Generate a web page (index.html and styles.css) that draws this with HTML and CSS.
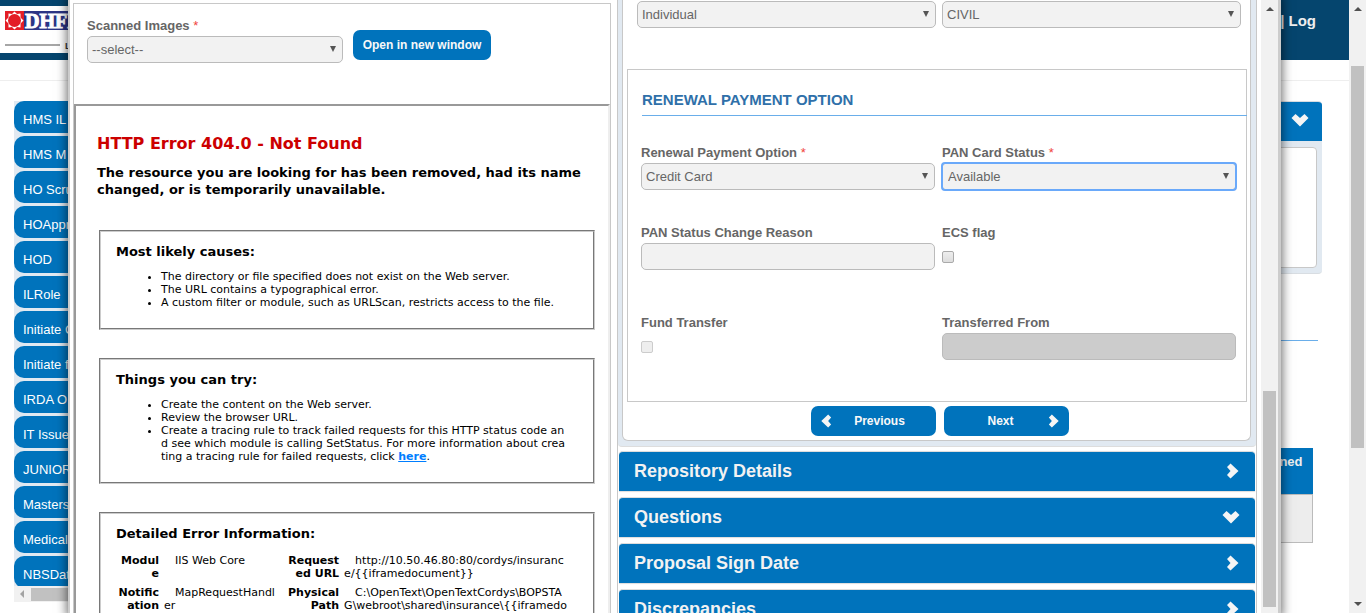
FILE: index.html
```html
<!DOCTYPE html>
<html lang="en">
<head>
<meta charset="utf-8">
<title>Renewal Payment Option</title>
<link rel="stylesheet" href="styles.css">
</head>
<body>
<svg class="defs" aria-hidden="true">
  <symbol id="chev-right" viewBox="0 0 14 16"><path d="M1 4 4.500 0.500 12.500 8 4.500 15.500 1 12 4.500 8Z"/></symbol>
  <symbol id="chev-left" viewBox="0 0 14 16"><path d="M13 4 9.500 0.500 1.500 8 9.500 15.500 13 12 9.500 8Z"/></symbol>
  <symbol id="chev-down" viewBox="0 0 18 14"><path d="M0.500 5 4.500 1 9 5 13.500 1 17.500 5 9 13.500Z"/></symbol>
</svg>
<div class="page">
  <div class="page-body">
    <header class="topbar">
      <div class="brand">
        <svg class="logo" width="100" height="47" viewBox="0 0 100 47" role="img" aria-label="DHFL">
          <rect x="5" y="5" width="90" height="19" fill="#2b3585"/>
          <rect x="5" y="5" width="19" height="19" fill="#e31e26"/>
          <path d="M14.500 5.500 17 8 20.500 7.500 20.500 11.500 23.500 14.500 20.500 17.500 20.500 21.500 17 21 14.500 23.500 12 21 8.500 21.500 8.500 17.500 5.500 14.500 8.500 11.500 8.500 7.500 12 8Z" fill="#fff"/>
          <circle cx="14.500" cy="14.500" r="6.500" fill="#e31e26"/>
          <text x="25" y="22" class="logo-name">DHFL</text>
          <path d="M5 39H60" stroke="#888" stroke-width="1.500"/>
          <text x="65" y="43" class="logo-sub">L</text>
        </svg>
      </div>
      <nav class="account"><span>|</span> <a href="#">Log</a></nav>
    </header>
    <div class="crumbs"></div>
    <div class="columns">
      <nav class="side">
        <ul class="roles">
          <li><a href="#">HMS IL</a></li>
          <li><a href="#">HMS M</a></li>
          <li><a href="#">HO Scru</a></li>
          <li><a href="#">HOAppr</a></li>
          <li><a href="#">HOD</a></li>
          <li><a href="#">ILRole</a></li>
          <li><a href="#">Initiate C</a></li>
          <li><a href="#">Initiate f</a></li>
          <li><a href="#">IRDA O</a></li>
          <li><a href="#">IT Issue</a></li>
          <li><a href="#">JUNIOR</a></li>
          <li><a href="#">Masters</a></li>
          <li><a href="#">Medical</a></li>
          <li><a href="#">NBSDat</a></li>
        </ul>
        <div class="hscroll"><span class="arrow-left"></span><span class="hthumb"></span></div>
      </nav>
      <main class="work">
        <section class="work-panel">
          <div class="work-head"><svg class="chev-d"><use href="#chev-down"/></svg></div>
          <div class="work-box"></div>
        </section>
        <div class="rule"></div>
        <table class="grid"><thead><tr><th>ned</th></tr></thead><tbody><tr><td></td></tr></tbody></table>
      </main>
    </div>
  </div>
  <div class="vscroll page-scroll"><span class="arrow-up"></span><span class="thumb"></span><span class="arrow-down"></span></div>
</div>

<div class="dialog" role="dialog">
  <div class="dialog-body">
    <section class="docs">
      <div class="docs-form">
        <div class="field scanned">
          <label for="scan">Scanned Images <span class="req">*</span></label>
          <div class="select"><select id="scan"><option>--select--</option></select></div>
        </div>
        <button type="button" class="btn open">Open in new window</button>
      </div>
      <article class="viewer">
        <h1>HTTP Error 404.0 - Not Found</h1>
        <h2>The resource you are looking for has been removed, had its name changed, or is temporarily unavailable.</h2>
        <div class="card">
          <h3>Most likely causes:</h3>
          <ul>
            <li>The directory or file specified does not exist on the Web server.</li>
            <li>The URL contains a typographical error.</li>
            <li>A custom filter or module, such as URLScan, restricts access to the file.</li>
          </ul>
        </div>
        <div class="card">
          <h3>Things you can try:</h3>
          <ul>
            <li>Create the content on the Web server.</li>
            <li>Review the browser URL.</li>
            <li>Create a tracing rule to track failed requests for this HTTP status code an<br>d see which module is calling SetStatus. For more information about crea<br>ting a tracing rule for failed requests, click <a href="#">here</a>.</li>
          </ul>
        </div>
        <div class="card">
          <h3>Detailed Error Information:</h3>
          <table class="details">
            <tr><th>Modul<br>e</th><td>IIS Web Core</td><th>Request<br>ed URL</th><td>http://10.50.46.80:80/cordys/insuranc<br>e/{{iframedocument}}</td></tr>
            <tr><th>Notific<br>ation</th><td>MapRequestHandl<br>er</td><th>Physical<br>Path</th><td>C:\OpenText\OpenTextCordys\BOPSTA<br>G\webroot\shared\insurance\{{iframedo</td></tr>
          </table>
        </div>
      </article>
    </section>

    <section class="accordion">
      <div class="pane">
        <form class="pane-inner">
          <div class="row top-row">
            <div class="select"><select aria-label="Type"><option>Individual</option></select></div>
            <div class="select"><select aria-label="Category"><option>CIVIL</option></select></div>
          </div>
          <div class="group">
            <h4>RENEWAL PAYMENT OPTION</h4>
            <div class="row fields">
              <div class="field">
                <label for="rpo">Renewal Payment Option <span class="req">*</span></label>
                <div class="select"><select id="rpo"><option>Credit Card</option></select></div>
              </div>
              <div class="field">
                <label for="pan">PAN Card Status <span class="req">*</span></label>
                <div class="select focus"><select id="pan"><option>Available</option></select></div>
              </div>
            </div>
            <div class="row fields">
              <div class="field">
                <label for="reason">PAN Status Change Reason</label>
                <input type="text" id="reason" class="text">
              </div>
              <div class="field">
                <label for="ecs">ECS flag</label>
                <input type="checkbox" id="ecs" class="check">
              </div>
            </div>
            <div class="row fields">
              <div class="field">
                <label for="fund">Fund Transfer</label>
                <input type="checkbox" id="fund" class="check" disabled>
              </div>
              <div class="field">
                <label for="from">Transferred From</label>
                <input type="text" id="from" class="text" disabled>
              </div>
            </div>
          </div>
          <div class="steps">
            <button type="button" class="btn step"><svg><use href="#chev-left"/></svg><span>Previous</span></button>
            <button type="button" class="btn step"><span>Next</span><svg><use href="#chev-right"/></svg></button>
          </div>
        </form>
      </div>
      <div class="bars">
        <button type="button" class="bar">Repository Details<svg class="chev-r"><use href="#chev-right"/></svg></button>
        <button type="button" class="bar">Questions<svg class="chev-d"><use href="#chev-down"/></svg></button>
        <button type="button" class="bar">Proposal Sign Date<svg class="chev-r"><use href="#chev-right"/></svg></button>
        <button type="button" class="bar">Discrepancies<svg class="chev-r"><use href="#chev-right"/></svg></button>
      </div>
    </section>
  </div>
  <div class="vscroll dialog-scroll"><span class="arrow-up"></span><span class="thumb"></span></div>
</div>
</body>
</html>
```
FILE: styles.css
```css
* { box-sizing: border-box; }
body {
  margin: 0;
  height: 100vh;
  overflow: hidden;
  position: relative;
  background: #fff;
  color: #666;
  font: 13px/20px "Liberation Sans", Arial, sans-serif;
}
button, select, input { font: inherit; color: inherit; margin: 0; }
h1, h2, h3, h4, ul { margin: 0; padding: 0; }
svg { display: block; fill: #f5f5f5; }
.defs { display: none; }
a { color: inherit; text-decoration: none; }

/* page behind the dialog */
.page { display: flex; height: 100%; }
.page-body { flex: 1; min-width: 0; }
.topbar { display: flex; justify-content: space-between; height: 60px; padding: 6px 0 7px; background: #05456e; }
.brand { background: #fff; width: 200px; }
.logo-name { font: bold 20px "Liberation Serif", serif; fill: #fff; stroke: #fff; stroke-width: 1px; }
.logo-sub { font: bold 9px "Liberation Sans", sans-serif; fill: #333; }
.account { padding: 5px 33px 0 0; color: #eee; font-weight: bold; font-size: 15px; }
.crumbs { height: 21px; border-bottom: 1px solid #eee; }
.columns { display: flex; padding: 20px 27px 0 14px; justify-content: space-between; }
.side { width: 220px; }
.roles { list-style: none; background: #e1e9f1; }
.roles li { padding-bottom: 3px; }
.roles li:last-child { padding-bottom: 0; height: 30px; overflow: hidden; }
.roles a { display: block; height: 32px; padding: 9px 9px 0; line-height: 19px; border-radius: 10px; background: #0073bc; color: #fff; }
.hscroll { display: flex; align-items: center; height: 16px; background: #f1f1f1; }
.arrow-left { width: 10px; height: 8px; border: 4px solid transparent; border-left-width: 6px; border-right-color: #a3a3a3; margin-right: 7px; }
.hthumb { width: 150px; height: 13px; background: #c1c1c1; }
.work { width: 900px; }
.work-panel { background: #e1e9f1; border: 1px solid #d8dde2; border-width: 1px 0 1px 1px; border-radius: 4px; height: 173px; padding-bottom: 5px; display: flex; flex-direction: column; overflow: hidden; }
.work-head { display: flex; justify-content: flex-end; align-items: center; height: 39px; padding: 0 13px 4px 0; background: #0073bc; }
.work-box { flex: 1; margin: 6px 5px 0; background: #fff; border: 1px solid #c8c8c8; border-radius: 0 4px 4px 0; }
.rule { border-top: 1px solid #6aaeea; margin: 66px 4px 107px 0; }
.grid { width: 891px; border-collapse: collapse; }
.grid th { height: 46px; padding: 4px 10px; background: #0073bc; color: #eee; text-align: right; vertical-align: top; }
.grid td { height: 48px; background: #ededed; border: 1px solid #bbb; }

/* scrollbars */
.vscroll { display: flex; flex-direction: column; align-items: center; width: 17px; background: #f1f1f1; }
.arrow-up { border: 4px solid transparent; border-top: 0; border-bottom-color: #505050; margin-top: 7px; }
.arrow-down { border: 4px solid transparent; border-bottom: 0; border-top-color: #505050; margin: auto 0 7px; }
.thumb { width: 13px; background: #c1c1c1; }
.page-scroll .thumb { margin-top: 55px; height: 382px; }
.dialog-scroll .thumb { margin-top: 380px; height: 216px; }

/* dialog */
.dialog {
  position: absolute;
  top: -4px;
  bottom: -4px;
  left: 68px;
  right: 85px;
  display: flex;
  padding: 4px 0;
  overflow: hidden;
  background: #fff;
  border: solid #ccc;
  border-width: 0 3px 0 2px;
  box-shadow: 0 0 10px 1px rgba(0, 0, 0, .6);
}
.dialog-body { flex: 1; min-width: 0; display: grid; grid-template-columns: 538fr 640fr; gap: 6px; padding: 0 4px 0 3px; }
.docs { display: flex; flex-direction: column; min-width: 0; margin-top: 3px; border: 1px solid #c8c8c8; border-bottom: 0; }
.docs-form { display: flex; align-items: flex-end; height: 100px; padding: 0 13px 41px; gap: 10px; flex: none; }
.scanned { width: 256px; }
.open { margin-bottom: 3px; width: 138px; }
.btn { height: 30px; padding: 0; border: 0; border-radius: 7px; background: #0073bc; color: #f8f8f8; font-size: 12px; font-weight: bold; }
label { display: block; font-weight: bold; }
.req { color: #f0443c; font-weight: normal; }
.select { position: relative; }
.select::after { content: ""; position: absolute; right: 7px; top: 10px; border: solid transparent; border-width: 6px 3px 0; border-top-color: #555; }
.select select, .text {
  display: block;
  width: 100%;
  height: 27px;
  padding: 0 4px;
  appearance: none;
  background: #f2f2f2;
  border: 1px solid #bbb;
  border-radius: 5px;
}
.text:disabled { background: #ccc; }
.focus select { outline: 2px solid #6aa9fa; outline-offset: -1px; border-radius: 3px; padding-left: 5px; }
.check { appearance: none; display: block; width: 12px; height: 12px; margin: 8px 0 7px; border: 1px solid #aaa; border-radius: 2px; background: linear-gradient(#eee, #ddd); }
.check:disabled { border-color: #ccc; background: #eee; }

/* error page */
.viewer { flex: 1; min-height: 0; overflow: hidden; padding: 28px 13px 0 21px; border: 2px solid #999; border-right-color: #eee; border-bottom: 0; color: #000; font-family: "DejaVu Sans", Verdana, sans-serif; font-size: 11px; line-height: 13px; }
.viewer h1 { font-size: 16px; line-height: 20px; color: #c00; margin-bottom: 10px; }
.viewer h2 { font-size: 13px; line-height: 17px; }
.card { margin: 32px 0 0 2px; border: 2px groove #ccc; padding: 10px 15px 19px; }
.card + .card { margin-top: 28px; }
.card h3 { font-size: 13px; line-height: 20px; }
.card ul { margin: 8px 0 0; padding-left: 45px; }
.card li { white-space: nowrap; }
.card li a { color: #007eff; font-weight: bold; text-decoration: underline; }
.details { border-spacing: 0; margin-top: 10px; white-space: nowrap; }
.details th, .details td { padding: 0 0 6px; vertical-align: top; }
.details th { width: 48px; text-align: right; padding-right: 5px; }
.details td { text-indent: 11px; width: 124px; }

/* accordion */
.accordion { min-width: 0; border: solid #c8c8c8; border-width: 0 1px; }
.pane { padding: 0 5px 5px 4px; background: #e1e9f1; border-bottom: 1px solid #ddd; border-radius: 0 0 4px 4px; margin-bottom: 4px; }
.pane-inner { background: #fff; border: 1px solid #c8c8c8; border-top: 0; border-radius: 0 0 6px 6px; padding: 1px 3px 4px 4px; }
.row { display: grid; grid-template-columns: 1fr 1fr; gap: 6px; }
.top-row { padding: 0 6px 0 10px; margin-bottom: 41px; }
.group { border: 1px solid #c8c8c8; padding-bottom: 41px; }
.group h4 { margin: 17px -1px 27px 14px; height: 29px; padding-top: 3px; font-size: 15px; color: #2f70a9; border-bottom: 1px solid #6aaeea; }
.fields { padding: 0 10px 0 13px; gap: 7px; margin-bottom: 33px; }
.fields + .fields { margin-bottom: 43px; }
.fields + .fields + .fields { margin-bottom: 0; }
.steps { display: flex; justify-content: center; gap: 8px; padding: 4px 0 0 6px; }
.step { display: flex; align-items: center; width: 125px; padding: 0 9px; }
.step span { flex: 1; text-align: center; }
.step svg { width: 12px; height: 14px; }
.bars { padding: 0 1px; }
.bar {
  display: flex;
  justify-content: space-between;
  align-items: center;
  width: 100%;
  height: 40px;
  margin-bottom: 6px;
  padding: 0 15px 2px;
  border: 0;
  border-top: 1px solid #ddd;
  border-radius: 4px 4px 0 0;
  background: #0073bc;
  color: #f2f2f2;
  font-size: 18px;
  font-weight: bold;
  box-shadow: 0 1px 1px #ddd;
}
.chev-r { width: 14px; height: 16px; }
.chev-d { width: 18px; height: 14px; }
```
